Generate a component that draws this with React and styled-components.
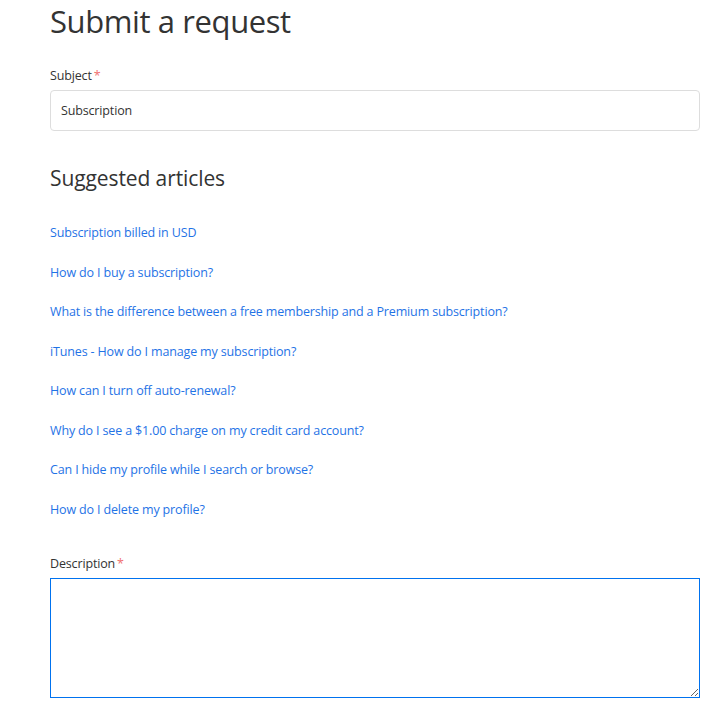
import React from "react";
import styled, { createGlobalStyle } from "styled-components";

const Global = createGlobalStyle`
  html, body { margin: 0; padding: 0; background: #fff; }
  body { font-family: "Open Sans", "Noto Sans", sans-serif; color: #333; }
  * { box-sizing: border-box; }
`;

const Page = styled.main`
  padding: 2px 28px 0 50px;
  width: 728px;
`;

const Title = styled.h1`
  margin: 0;
  font-size: 31px;
  letter-spacing: -0.4px;
  font-weight: 400;
  line-height: 38px;
  color: #333;
`;

const Field = styled.div`
  display: flex;
  flex-direction: column;
  margin-top: ${(p) => p.$top || 0}px;
`;

const Label = styled.label`
  font-size: 12.5px;
  letter-spacing: -0.15px;
  line-height: 18px;
  color: #333;
  margin-bottom: 5px;
  &::after {
    content: "*";
    color: #f07070;
    margin-left: 2px;
  }
`;

const Input = styled.input`
  height: 41px;
  width: 100%;
  border: 1px solid #ddd;
  border-radius: 4px;
  padding: 0 10px;
  font: inherit;
  font-size: 12.5px;
  letter-spacing: -0.15px;
  color: #333;
  outline: none;
`;

const SectionTitle = styled.h2`
  margin: 33px 0 0;
  font-size: 21px;
  letter-spacing: -0.1px;
  font-weight: 400;
  line-height: 28px;
  color: #333;
`;

const Articles = styled.ul`
  list-style: none;
  margin: 32px 0 0;
  padding: 0;
  display: flex;
  flex-direction: column;
  gap: 21.5px;
`;

const Article = styled.a`
  display: block;
  font-size: 12.5px;
  letter-spacing: -0.15px;
  line-height: 18px;
  color: #1f73e6;
  text-decoration: none;
`;

const TextArea = styled.textarea`
  height: 120px;
  width: 100%;
  border: 1px solid #0072ef;
  border-radius: 0;
  font: inherit;
  outline: none;
  resize: vertical;
  display: block;
`;

const articles = [
  "Subscription billed in USD",
  "How do I buy a subscription?",
  "What is the difference between a free membership and a Premium subscription?",
  "iTunes - How do I manage my subscription?",
  "How can I turn off auto-renewal?",
  "Why do I see a $1.00 charge on my credit card account?",
  "Can I hide my profile while I search or browse?",
  "How do I delete my profile?",
];

export default function App() {
  return (
    <>
      <Global />
      <Page>
        <Title>Submit a request</Title>
        <Field $top={27}>
          <Label>Subject</Label>
          <Input defaultValue="Subscription" />
        </Field>
        <SectionTitle>Suggested articles</SectionTitle>
        <Articles>
          {articles.map((a) => (
            <li key={a}>
              <Article href="#">{a}</Article>
            </li>
          ))}
        </Articles>
        <Field $top={36}>
          <Label>Description</Label>
          <TextArea />
        </Field>
      </Page>
    </>
  );
}
